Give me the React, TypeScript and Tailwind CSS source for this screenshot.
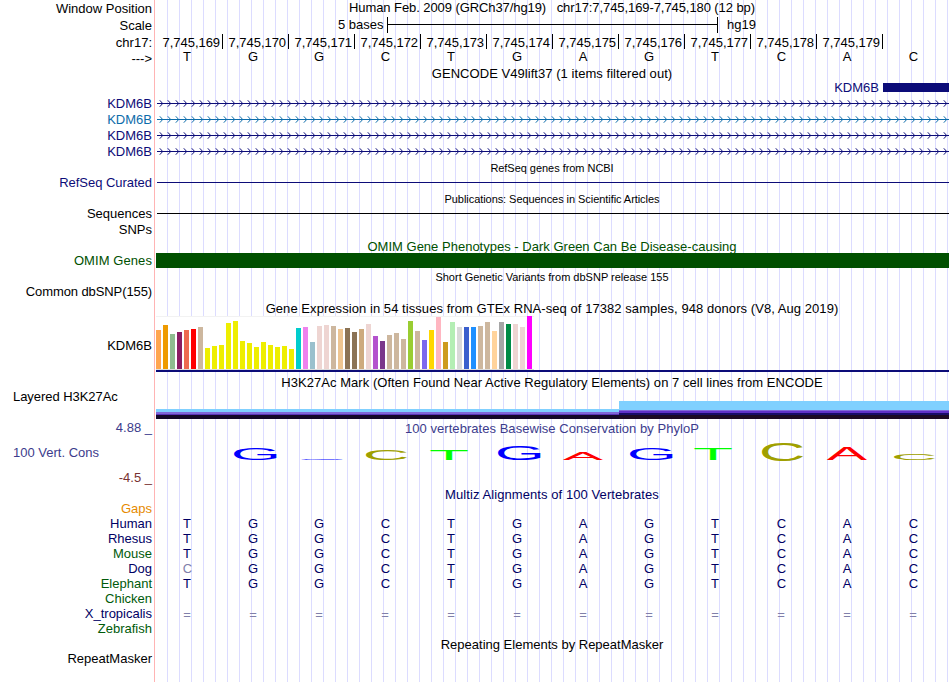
import React from "react";

const BASES = ["T", "G", "G", "C", "T", "G", "A", "G", "T", "C", "A", "C"];

const POSITIONS = [
  "7,745,169", "7,745,170", "7,745,171", "7,745,172", "7,745,173", "7,745,174",
  "7,745,175", "7,745,176", "7,745,177", "7,745,178", "7,745,179",
];

const LABELS: { text: string; cls: string }[] = [
  { text: "Window Position", cls: "h-[17px]" },
  { text: "Scale", cls: "h-[17px]" },
  { text: "chr17:", cls: "h-[17px]" },
  { text: "--->", cls: "-mt-px h-[16px]" },
  { text: "KDM6B", cls: "mt-[29px] h-[16px] text-[#0c0c78]" },
  { text: "KDM6B", cls: "h-[16px] text-[#0c6caa]" },
  { text: "KDM6B", cls: "h-[16px] text-[#0c0c78]" },
  { text: "KDM6B", cls: "h-[16px] text-[#0c0c78]" },
  { text: "RefSeq Curated", cls: "mt-[15px] h-[16px] tracking-[-0.03px] text-[#0c0c78]" },
  { text: "Sequences", cls: "mt-[15px] h-[16px]" },
  { text: "SNPs", cls: "h-[16px]" },
  { text: "OMIM Genes", cls: "mt-[15px] h-[16px] tracking-[0.08px] text-[#005000]" },
  { text: "Common dbSNP(155)", cls: "mt-[15px] h-[16px] tracking-[-0.1px]" },
  { text: "KDM6B", cls: "mt-[38px] h-[16px]" },
];

const SPECIES: { name: string; cls: string; row: string }[] = [
  { name: "Gaps", cls: "text-[#e68a00]", row: "            " },
  { name: "Human", cls: "text-[#000064]", row: "TGGCTGAGTCAC" },
  { name: "Rhesus", cls: "text-[#000064]", row: "TGGCTGAGTCAC" },
  { name: "Mouse", cls: "text-[#005a0a]", row: "TGGCTGAGTCAC" },
  { name: "Dog", cls: "text-[#000064]", row: "cGGCTGAGTCAC" },
  { name: "Elephant", cls: "text-[#005a0a]", row: "TGGCTGAGTCAC" },
  { name: "Chicken", cls: "text-[#005a0a]", row: "            " },
  { name: "X_tropicalis", cls: "text-[#000064]", row: "============" },
  { name: "Zebrafish", cls: "text-[#005a0a]", row: "            " },
];

const TISSUES: [number, string][] = [
  [39, "#ffa54f"], [44, "#ee9a00"], [35, "#8fbc8f"], [37, "#8b1c62"], [39, "#ee6a50"],
  [40, "#ff0000"], [42, "#cdb79e"], [21, "#eeee00"], [23, "#eeee00"], [24, "#eeee00"],
  [46, "#eeee00"], [48, "#eeee00"], [28, "#eeee00"], [26, "#eeee00"], [22, "#eeee00"],
  [27, "#eeee00"], [24, "#eeee00"], [22, "#eeee00"], [23, "#eeee00"], [20, "#eeee00"],
  [41, "#00cdcd"], [42, "#ee82ee"], [27, "#9ac0cd"], [43, "#eed5d2"], [44, "#eed5d2"],
  [43, "#cdb79e"], [40, "#eec591"], [41, "#8b7355"], [37, "#8b7355"], [40, "#cdaa7d"],
  [45, "#eed5d2"], [33, "#b452cd"], [28, "#7a378b"], [34, "#cdb79e"], [36, "#cdb79e"],
  [30, "#cdb79e"], [48, "#9acd32"], [38, "#cdb79e"], [29, "#7b68ee"], [39, "#ffd700"],
  [52, "#ffb6c1"], [27, "#cd9b1d"], [47, "#b4eeb4"], [42, "#d9d9d9"], [42, "#3a5fcd"],
  [42, "#1e90ff"], [43, "#cdb79e"], [47, "#cdb79e"], [38, "#ffd39b"], [47, "#a6a6a6"],
  [45, "#008b45"], [45, "#eed5d2"], [42, "#eed5d2"], [53, "#ff00ff"],
];

// Conservation logo: letter, left, right, top and bottom within the track.
const LOGO: [string, number, number, number, number][] = [
  ["G", 79, 122, 12, 24], ["G", 146, 188, 23.1, 23.9], ["C", 211, 252, 13, 24],
  ["T", 275.3, 312.7, 14, 24], ["G", 343, 386, 10, 24], ["A", 408, 448, 16, 24],
  ["G", 475, 518, 12, 24], ["T", 539.3, 576.7, 13, 24], ["C", 607, 648, 7, 25],
  ["A", 672, 712, 11, 24], ["C", 739, 780, 18, 24],
];

// Glyph extents in em: left, right, below baseline, above baseline.
const GLYPH: Record<string, [number, number, number, number, string]> = {
  G: [0.05, 0.715, 0.01, 0.698, "#0000ff"],
  C: [0.05, 0.683, 0.01, 0.698, "#a0a000"],
  T: [0.021, 0.59, 0, 0.688, "#00ff00"],
  A: [0.003, 0.664, 0, 0.688, "#ff0000"],
};

function Title({ children, cls = "leading-[18px]" }: { children: React.ReactNode; cls?: string }) {
  return <div className={`h-[16px] text-center whitespace-pre ${cls}`}>{children}</div>;
}

function GeneLine({ color, id }: { color: string; id: string }) {
  return (
    <svg className="ml-[2px] block h-[16px] w-[792px]" viewBox="0 0 792 16">
      <defs>
        <pattern id={id} width="8" height="16" x="1" patternUnits="userSpaceOnUse">
          <path d="M1.8 5.3 L4.7 8.5 L1.8 11.7" fill="none" stroke={color} strokeWidth="1" />
        </pattern>
      </defs>
      <rect x="0" y="8" width="792" height="1" fill={color} shapeRendering="crispEdges" />
      <rect x="1" width="791" height="16" fill={`url(#${id})`} />
    </svg>
  );
}

function BaseRow({ row, cls }: { row: string; cls: string }) {
  return (
    <div className={`-ml-px flex w-[794px] overflow-visible ${cls}`}>
      {row.split("").map((b, i) => (
        <span
          key={i}
          className={`w-[66px] shrink-0 text-center ${b === "c" || b === "=" ? "text-[#8080aa]" : ""} ${b === "C" || b === "c" ? "pl-px" : ""} ${b === "=" ? "pt-px" : ""}`}
        >
          {b.toUpperCase()}
        </span>
      ))}
    </div>
  );
}

function Labels() {
  return (
    <div className="flex w-[154px] shrink-0 flex-col pt-px text-right leading-[16px]">
      {LABELS.map((l, i) => (
        <div key={i} className={`pr-[2px] ${l.cls}`}>{l.text}</div>
      ))}
      <div className="mt-[35px] h-[16px] pl-[13px] text-left tracking-[-0.05px]">Layered H3K27Ac</div>
      <div className="mt-[15px] h-[16px] pr-[2px] text-[#3c3c8c]">4.88 _</div>
      <div className="mt-[9px] h-[16px] pl-[13px] text-left text-[#3c3c8c]">100 Vert. Cons</div>
      <div className="mt-[9px] h-[16px] pr-[2px] text-[#783232]">-4.5 _</div>
      <div className="mt-[15px] flex flex-col leading-[15px]">
        {SPECIES.map((s) => (
          <div key={s.name} className={`h-[15px] pr-[2px] ${s.cls}`}>{s.name}</div>
        ))}
      </div>
      <div className="mt-[15px] h-[16px] pr-[2px]">RepeatMasker</div>
    </div>
  );
}

export default function App() {
  return (
    <div className="flex h-[682px] w-[950px] overflow-hidden bg-white font-['Liberation_Sans',Arial,sans-serif] text-[13px] text-black">
      <Labels />
      <div className="w-px shrink-0 bg-[#ffb4b4]" />
      <div className="flex w-[794px] shrink-0 flex-col overflow-hidden bg-[linear-gradient(to_right,white_1px,transparent_1px),repeating-linear-gradient(to_right,#dcdcff_0px,#dcdcff_1px,transparent_1px,transparent_12px)]">
        <div className="h-[15px] text-center leading-[16px] tracking-[-0.08px] whitespace-pre">
          Human Feb. 2009 (GRCh37/hg19)   chr17:7,745,169-7,745,180 (12 bp)
        </div>
        <div className="flex h-[19px] items-center pl-[183px] pt-[1px]">
          <span className="w-[46px]">5 bases</span>
          <div className="ml-[3px] flex h-[16px] w-[331px] items-center border-x border-black">
            <div className="-mt-px h-px w-full bg-black" />
          </div>
          <span className="ml-[9px]">hg19</span>
        </div>
        <div className="flex h-[15px] pl-[2px] leading-[17px] tracking-[-0.05px]">
          {POSITIONS.map((p) => (
            <div key={p} className="w-[66px] shrink-0 border-r border-black pr-[2px] text-right">{p}</div>
          ))}
        </div>
        <BaseRow row={BASES.join("")} cls="h-[16px] leading-[16px]" />
        <Title cls="leading-[18px] tracking-[0.05px]">GENCODE V49lift37 (1 items filtered out)</Title>
        <div className="flex h-[14px] items-start text-[#0c0c78]">
          <span className="-mt-px w-[724px] text-right leading-[16px]">KDM6B</span>
          <div className="ml-[4px] mt-[2px] h-[9px] flex-1 bg-[#0c0c78]" />
        </div>
        <GeneLine id="g1" color="#0c0c78" />
        <GeneLine id="g2" color="#0c6caa" />
        <GeneLine id="g3" color="#0c0c78" />
        <GeneLine id="g4" color="#0c0c78" />
        <Title cls="mt-[1px] text-[11px] leading-[16px] tracking-[-0.04px]">RefSeq genes from NCBI</Title>
        <div className="mt-[6px] ml-[2px] h-px bg-[#0c0c78]" />
        <Title cls="mt-[8px] text-[11px] leading-[16px] tracking-[-0.06px]">Publications: Sequences in Scientific Articles</Title>
        <div className="mt-[6px] ml-[2px] h-px bg-black" />
        <Title cls="mt-[24px] leading-[18px] tracking-[0.01px] text-[#005000]">OMIM Gene Phenotypes - Dark Green Can Be Disease-causing</Title>
        <div className="-mt-px ml-px h-[15px] bg-[#005000]" />
        <Title cls="mt-[1px] text-[11px] leading-[16px]">Short Genetic Variants from dbSNP release 155</Title>
        <Title cls="mt-[15px] leading-[18px] tracking-[0.06px]">Gene Expression in 54 tissues from GTEx RNA-seq of 17382 samples, 948 donors (V8, Aug 2019)</Title>
        <div className="ml-px flex h-[54px] w-[378px] items-end gap-[2px] border-b border-[#dcdcdc] bg-white shadow-[inset_0_1px_0_#f2f2f2]">
          {TISSUES.map(([h, c], i) => (
            <div key={i} className="w-[5px] shrink-0" style={{ height: h, backgroundColor: c }} />
          ))}
        </div>
        <div className="ml-px h-[2px] bg-[#0c0c78]" />
        <Title cls="mt-[2px] leading-[18px] tracking-[0.045px]">H3K27Ac Mark (Often Found Near Active Regulatory Elements) on 7 cell lines from ENCODE</Title>
        <div className="mt-[11px] ml-px flex h-[18px] items-end">
          <div className="w-[463px]">
            <div className="h-[3px] bg-[#80d0ff]" />
            <div className="h-[2px] bg-[#8068d8]" />
            <div className="h-px bg-[#5c34b8]" />
            <div className="h-[4px] bg-[#140828]" />
          </div>
          <div className="flex-1">
            <div className="h-[9px] bg-[#80d0ff]" />
            <div className="h-px bg-[#8068d8]" />
            <div className="h-[2px] bg-[#6030c8]" />
            <div className="h-[2px] bg-[#180c68]" />
            <div className="h-[4px] bg-[#1c0a24]" />
          </div>
        </div>
        <Title cls="mt-[1px] leading-[18px] tracking-[0.04px] text-[#3c3c8c]">100 vertebrates Basewise Conservation by PhyloP</Title>
        <svg className="block h-[30px] w-[794px]" viewBox="0 0 794 30">
          {LOGO.map(([ch, x0, x1, y0, y1], i) => {
            const [l, r, below, above, fill] = GLYPH[ch];
            const sx = (x1 - x0) / ((r - l) * 100);
            const sy = (y1 - y0) / ((above + below) * 100);
            return (
              <text
                key={i}
                fontSize="100"
                fill={fill}
                transform={`translate(${x0 - l * 100 * sx} ${y1 - below * 100 * sy}) scale(${sx} ${sy})`}
              >
                {ch}
              </text>
            );
          })}
        </svg>
        <Title cls="mt-[20px] leading-[18px] tracking-[0.08px] text-[#000064]">Multiz Alignments of 100 Vertebrates</Title>
        <div className="-mt-px flex flex-col text-[#000064]">
          {SPECIES.map((s) => (
            <BaseRow key={s.name} row={s.row} cls="h-[15px] leading-[15px]" />
          ))}
        </div>
        <Title>Repeating Elements by RepeatMasker</Title>
      </div>
    </div>
  );
}
